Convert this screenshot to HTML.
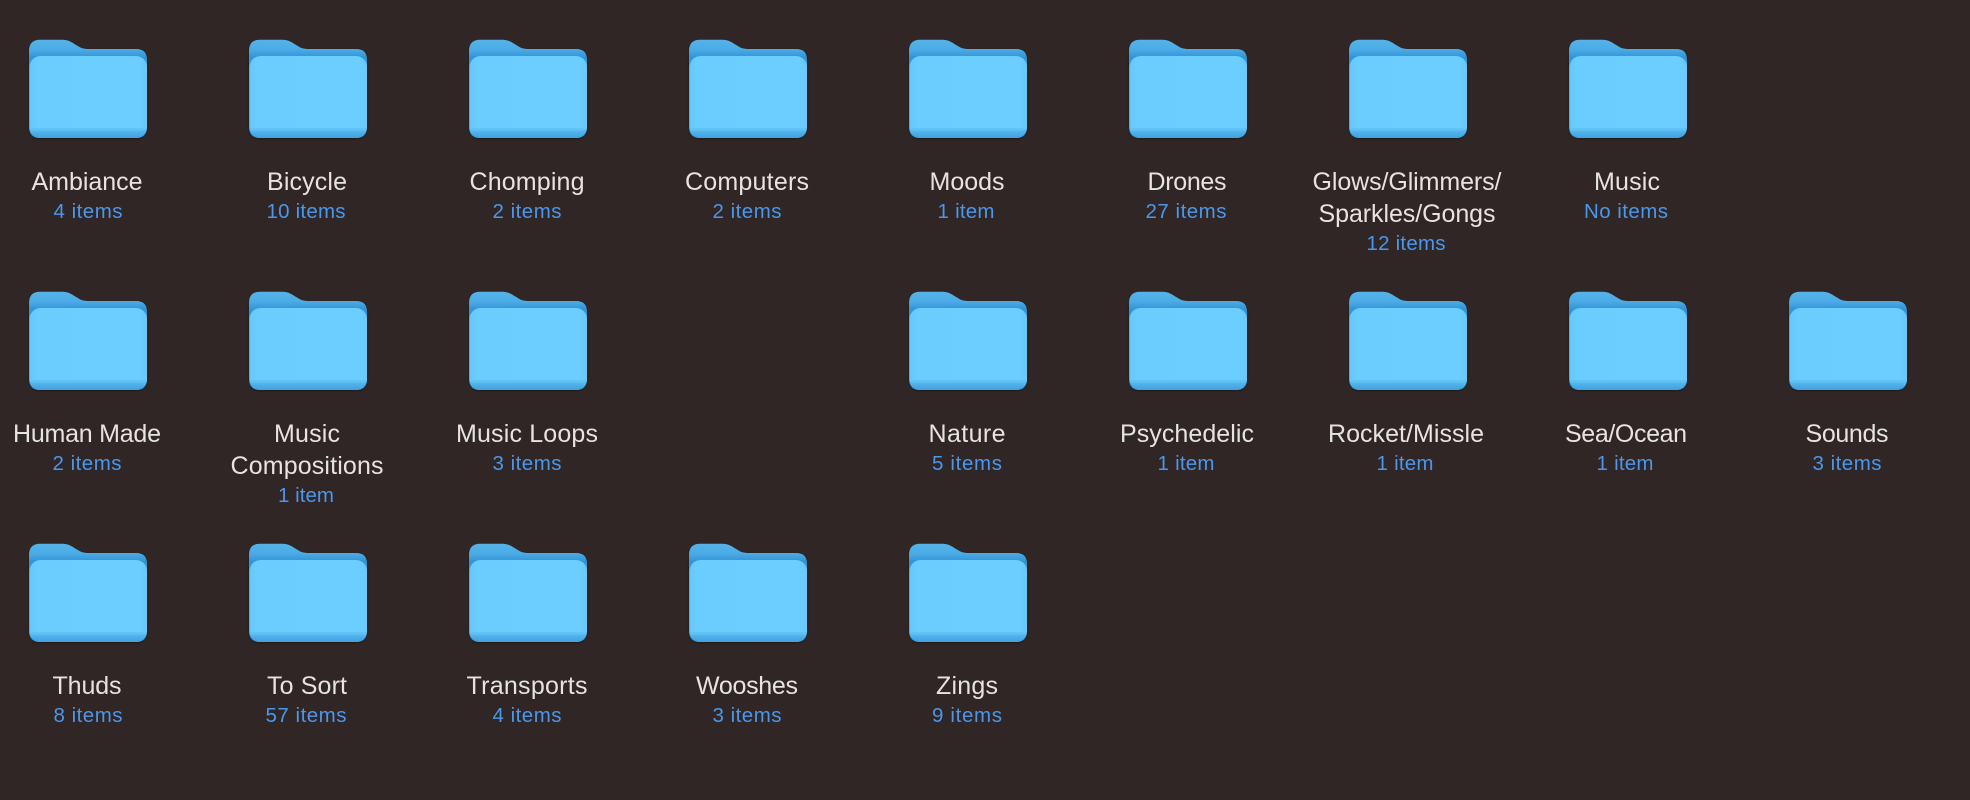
<!DOCTYPE html>
<html>
<head>
<meta charset="utf-8">
<title>Folders</title>
<style>
html,body{margin:0;padding:0;background:#2f2625;width:1970px;height:800px;overflow:hidden}
svg{display:block}
text{font-family:"Liberation Sans",sans-serif;text-anchor:middle}
.l{font-size:25px;fill:#e6e3e1}
.s{font-size:20.5px;fill:#4b97ec}
</style>
</head>
<body>
<svg width="1970" height="800" viewBox="0 0 1970 800" xmlns="http://www.w3.org/2000/svg">
<defs>
<linearGradient id="b" x1="0" y1="0" x2="0" y2="1"><stop offset="0" stop-color="#55b3e9"/><stop offset=".1" stop-color="#4cabe5"/><stop offset=".18" stop-color="#3295d7"/><stop offset="1" stop-color="#2f8fd0"/></linearGradient>
<linearGradient id="f" x1="0" y1="0" x2="1" y2="0"><stop offset="0" stop-color="#66c6f8"/><stop offset=".07" stop-color="#6bcdfd"/><stop offset=".93" stop-color="#6ccefe"/><stop offset="1" stop-color="#67c8fa"/></linearGradient>
<linearGradient id="v" x1="0" y1="0" x2="0" y2="1"><stop offset="0" stop-color="#63c4f7"/><stop offset=".3" stop-color="#5cbdf2"/><stop offset=".34" stop-color="#52b3ec"/><stop offset="1" stop-color="#3fa1df"/></linearGradient>
<clipPath id="c"><rect x=".5" y="17" width="117.5" height="82" rx="11"/></clipPath>
<filter id="sh" x="-10%" y="-10%" width="120%" height="120%"><feDropShadow dx="0" dy="1" stdDeviation="1" flood-color="#000" flood-opacity=".35"/></filter>
<g id="d">
<path filter="url(#sh)" d="M0 12Q0 .7 11 .7H33C40 .7 44 4 48 6.5S54 10 60 10H107Q118 10 118 21V88Q118 99 107 99H11Q0 99 0 88Z" fill="url(#b)"/>
<g clip-path="url(#c)">
<rect x="0" y="17" width="118" height="82" fill="url(#f)"/>
<rect x="0" y="89" width="118" height="10" fill="url(#v)"/>
</g>
</g>
</defs>
<use href="#d" x="29" y="39"/><use href="#d" x="249" y="39"/><use href="#d" x="469" y="39"/><use href="#d" x="689" y="39"/><use href="#d" x="909" y="39"/><use href="#d" x="1129" y="39"/><use href="#d" x="1349" y="39"/><use href="#d" x="1569" y="39"/>
<use href="#d" x="29" y="291"/><use href="#d" x="249" y="291"/><use href="#d" x="469" y="291"/><use href="#d" x="909" y="291"/><use href="#d" x="1129" y="291"/><use href="#d" x="1349" y="291"/><use href="#d" x="1569" y="291"/><use href="#d" x="1789" y="291"/>
<use href="#d" x="29" y="543"/><use href="#d" x="249" y="543"/><use href="#d" x="469" y="543"/><use href="#d" x="689" y="543"/><use href="#d" x="909" y="543"/>

<text class="l" x="87" y="190" textLength="111">Ambiance</text><text class="s" x="88" y="218" textLength="69">4 items</text>
<text class="l" x="307" y="190" textLength="80">Bicycle</text><text class="s" x="306" y="218" textLength="79">10 items</text>
<text class="l" x="527" y="190" textLength="115">Chomping</text><text class="s" x="527" y="218" textLength="69">2 items</text>
<text class="l" x="747" y="190" textLength="124">Computers</text><text class="s" x="747" y="218" textLength="69">2 items</text>
<text class="l" x="967" y="190" textLength="75">Moods</text><text class="s" x="966" y="218" textLength="57">1 item</text>
<text class="l" x="1187" y="190" textLength="79">Drones</text><text class="s" x="1186" y="218" textLength="81">27 items</text>
<text class="l" x="1407" y="190" textLength="189">Glows/Glimmers/</text><text class="l" x="1407" y="222" textLength="177">Sparkles/Gongs</text><text class="s" x="1406" y="250" textLength="79">12 items</text>
<text class="l" x="1627" y="190" textLength="66">Music</text><text class="s" x="1626" y="218" textLength="84">No items</text>

<text class="l" x="87" y="442" textLength="148">Human Made</text><text class="s" x="87" y="470" textLength="69">2 items</text>
<text class="l" x="307" y="442" textLength="66">Music</text><text class="l" x="307" y="474" textLength="153">Compositions</text><text class="s" x="306" y="502" textLength="56">1 item</text>
<text class="l" x="527" y="442" textLength="142">Music Loops</text><text class="s" x="527" y="470" textLength="69">3 items</text>
<text class="l" x="967" y="442" textLength="77">Nature</text><text class="s" x="967" y="470" textLength="70">5 items</text>
<text class="l" x="1187" y="442" textLength="134">Psychedelic</text><text class="s" x="1186" y="470" textLength="57">1 item</text>
<text class="l" x="1406" y="442" textLength="156">Rocket/Missle</text><text class="s" x="1405" y="470" textLength="57">1 item</text>
<text class="l" x="1626" y="442" textLength="122">Sea/Ocean</text><text class="s" x="1625" y="470" textLength="57">1 item</text>
<text class="l" x="1847" y="442" textLength="83">Sounds</text><text class="s" x="1847" y="470" textLength="69">3 items</text>

<text class="l" x="87" y="694" textLength="69">Thuds</text><text class="s" x="88" y="722" textLength="69">8 items</text>
<text class="l" x="307" y="694" textLength="80">To Sort</text><text class="s" x="306" y="722" textLength="81">57 items</text>
<text class="l" x="527" y="694" textLength="121">Transports</text><text class="s" x="527" y="722" textLength="69">4 items</text>
<text class="l" x="747" y="694" textLength="102">Wooshes</text><text class="s" x="747" y="722" textLength="69">3 items</text>
<text class="l" x="967" y="694" textLength="62">Zings</text><text class="s" x="967" y="722" textLength="70">9 items</text>
</svg>
</body>
</html>
